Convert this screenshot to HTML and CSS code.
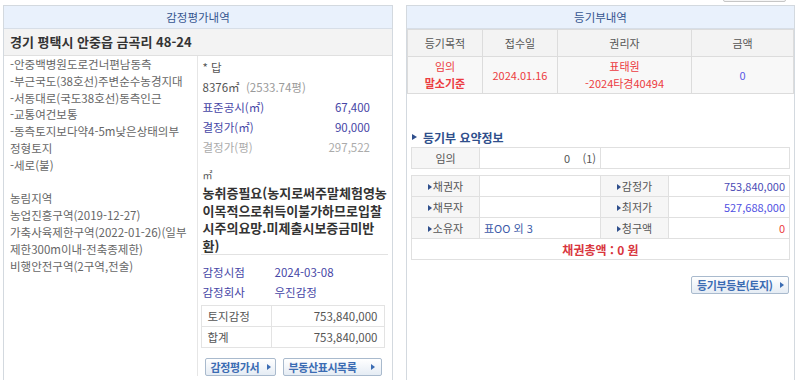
FILE: index.html
```html
<!DOCTYPE html>
<html lang="ko">
<head>
    <meta charset="UTF-8">
    <meta name="viewport" content="width=device-width, initial-scale=1.0">
    <title>감정평가내역 / 등기부내역</title>
    <link rel="stylesheet" href="styles.css">
</head>
<body>
    <div class="topbar"><span class="top-btn"></span></div>
    <div class="wrap">
        <!-- 감정평가 -->
        <div class="panel appraisal">
            <div class="panel-title">감정평가내역</div>
            <div class="addr">경기 평택시 안중읍 금곡리 48-24</div>
            <div class="detail">
                <div class="desc">
                    -안중백병원도로건너편남동측<br>
                    -부근국도(38호선)주변순수농경지대<br>
                    -서동대로(국도38호선)동측인근<br>
                    -교통여건보통<br>
                    -동측토지보다약4-5m낮은상태의부<br>
                    정형토지<br>
                    -세로(불)<br>
                    <br>
                    농림지역<br>
                    농업진흥구역(2019-12-27)<br>
                    가축사육제한구역(2022-01-26)(일부<br>
                    제한300m이내-전축종제한)<br>
                    비행안전구역(2구역,전술)
                </div>
                <div class="info">
                    <div class="row">* 답</div>
                    <div class="row">8376㎡ &nbsp;<span class="muted">(2533.74평)</span></div>
                    <div class="row price"><span>표준공시(㎡)</span><span>67,400</span></div>
                    <div class="row price"><span>결정가(㎡)</span><span>90,000</span></div>
                    <div class="row price dim"><span>결정가(평)</span><span>297,522</span></div>
                    <div class="unit">㎡</div>
                    <div class="notice-box">
                        <p class="notice">농취증필요(농지로써주말체험영농이목적으로취득이불가하므로입찰시주의요망.미제출시보증금미반환)</p>
                    </div>
                    <div class="row meta"><span class="key">감정시점</span><span>2024-03-08</span></div>
                    <div class="row meta"><span class="key">감정회사</span><span>우진감정</span></div>
                    <table class="amount-table">
                        <tr><td class="name">토지감정</td><td class="num">753,840,000</td></tr>
                        <tr><td class="name">합계</td><td class="num">753,840,000</td></tr>
                    </table>
                    <div class="btns">
                        <button class="btn">감정평가서</button>
                        <button class="btn wide">부동산표시목록</button>
                    </div>
                </div>
            </div>
        </div>

        <!-- 등기부 -->
        <div class="panel registry">
            <div class="panel-title">등기부내역</div>
            <table class="reg-table">
                <colgroup>
                    <col style="width: 75px">
                    <col style="width: 75px">
                    <col style="width: 134px">
                    <col>
                </colgroup>
                <tr>
                    <th>등기목적</th>
                    <th>접수일</th>
                    <th>권리자</th>
                    <th>금액</th>
                </tr>
                <tr>
                    <td class="red">임의<br><b>말소기준</b></td>
                    <td class="red">2024.01.16</td>
                    <td class="red">표태원<br>-2024타경40494</td>
                    <td class="blue">0</td>
                </tr>
            </table>

            <div class="summary">
                <h3 class="sum-title">등기부 요약정보</h3>
                <table class="sum-table">
                    <colgroup>
                        <col style="width: 68px">
                        <col style="width: 121px">
                        <col style="width: 68px">
                        <col>
                    </colgroup>
                    <tr>
                        <td class="label plain">임의</td>
                        <td class="val right">0&nbsp;&nbsp;&nbsp;&nbsp;(1)</td>
                        <td colspan="2"></td>
                    </tr>
                </table>
                <table class="sum-table second">
                    <colgroup>
                        <col style="width: 68px">
                        <col style="width: 121px">
                        <col style="width: 68px">
                        <col>
                    </colgroup>
                    <tr>
                        <td class="label">채권자</td>
                        <td class="val"></td>
                        <td class="label">감정가</td>
                        <td class="val right navy">753,840,000</td>
                    </tr>
                    <tr>
                        <td class="label">채무자</td>
                        <td class="val"></td>
                        <td class="label">최저가</td>
                        <td class="val right bright">527,688,000</td>
                    </tr>
                    <tr>
                        <td class="label">소유자</td>
                        <td class="val owner">표OO 외 3</td>
                        <td class="label">청구액</td>
                        <td class="val right red">0</td>
                    </tr>
                    <tr>
                        <td colspan="4" class="total">채권총액 : 0 원</td>
                    </tr>
                </table>
                <div class="btn-row">
                    <button class="btn reg">등기부등본(토지)</button>
                </div>
            </div>
        </div>
    </div>
</body>
</html>
```

FILE: styles.css
```css
/* General */
* {
    box-sizing: border-box;
}
body {
    margin: 0;
    font-family: "Noto Sans CJK KR", "Noto Sans", sans-serif;
    font-size: 11px;
    color: #555555;
    background: #ffffff;
    overflow: hidden;
}
.topbar {
    height: 5px;
    overflow: hidden;
    display: flex;
    justify-content: flex-end;
    padding-right: 14px;
}
.top-btn {
    width: 63px;
    height: 20px;
    margin-top: -18px;
    border: 1px solid #c6c6c6;
    border-radius: 2px;
    background: #f5f5f5;
}
.wrap {
    display: flex;
    gap: 13px;
    padding-left: 3px;
}

/* Panels */
.panel {
    border: 1px solid #d3d9df;
    border-bottom: none;
    height: 375px;
}
.appraisal {
    width: 390px;
}
.registry {
    width: 389px;
}
.panel-title {
    height: 23px;
    line-height: 22px;
    background: #e9f1fc;
    border-bottom: 1px solid #d7dee7;
    text-align: center;
    color: #35558f;
    font-size: 11.5px;
}

/* 감정평가 */
.addr {
    height: 27px;
    line-height: 26px;
    padding-left: 6px;
    background: #f3f3f3;
    border-bottom: 1px solid #e0e0e0;
    font-size: 13px;
    font-weight: bold;
    color: #333333;
}
.detail {
    display: flex;
}
.desc {
    width: 196px;
    padding-left: 6px;
    border-right: 1px solid #e6e6e6;
    font-size: 11.5px;
    line-height: 16.8px;
    color: #666666;
    white-space: nowrap;
}
.info {
    flex: 1;
    padding: 1px 4px 0 3px;
}
.row {
    height: 20px;
    line-height: 20px;
    padding-left: 2px;
    font-size: 11.5px;
}
.muted {
    color: #9a9a9a;
}
.price {
    display: flex;
    justify-content: space-between;
    padding-right: 18px;
    color: #4646a6;
}
.price.dim {
    color: #ababab;
}
.unit {
    margin-top: 8px;
    height: 19px;
    line-height: 19px;
    padding-left: 2px;
    font-size: 10px;
}
.notice-box {
    border-bottom: 1px solid #e2e2e2;
}
.notice {
    width: 187.5px;
    margin: 0;
    padding-left: 2px;
    font-size: 13px;
    font-weight: bold;
    line-height: 17.5px;
    color: #333333;
    word-break: break-all;
}
.meta {
    color: #4646a6;
}
.meta .key {
    display: inline-block;
    width: 72px;
}
.notice-box + .meta {
    margin-top: 7px;
}
.amount-table {
    width: 184px;
    margin-top: 3px;
    border-collapse: collapse;
    font-size: 11.5px;
}
.amount-table td {
    height: 21px;
    padding: 0 6px;
    border: 1px solid #e3e3e3;
}
.amount-table .name {
    width: 70px;
    color: #555555;
}
.amount-table .num {
    text-align: right;
    color: #555555;
}
.btns {
    display: flex;
    gap: 7px;
    margin-top: 10px;
    padding-left: 4px;
}

/* Buttons */
.btn {
    display: flex;
    align-items: center;
    justify-content: space-between;
    width: 71px;
    height: 18px;
    padding: 0 4px 0 5px;
    border: 1px solid #a9bacd;
    border-radius: 2px;
    background: linear-gradient(#ffffff, #e5ecf4);
    color: #3b6cb3;
    font-family: inherit;
    font-size: 11px;
    font-weight: bold;
    letter-spacing: -0.4px;
    cursor: pointer;
}
.btn::after {
    content: "";
    border-left: 4px solid #3b6cb3;
    border-top: 3.5px solid transparent;
    border-bottom: 3.5px solid transparent;
}
.btn.wide {
    width: 99px;
    padding-right: 6px;
}
.btn.reg {
    width: 98px;
}

/* 등기부 */
.reg-table {
    width: 100%;
    border-collapse: collapse;
    table-layout: fixed;
}
.reg-table th,
.reg-table td {
    border: 1px solid #dcdcdc;
    text-align: center;
}
.reg-table th {
    height: 27px;
    background: #f3f3f3;
    font-weight: normal;
    color: #555555;
}
.reg-table td {
    height: 34px;
    line-height: 17px;
    background: #f8f8f8;
}
.red {
    color: #ec3b41;
}
.blue {
    color: #5a5ae6;
}
.summary {
    padding: 0 4px;
}
.sum-title {
    display: flex;
    align-items: center;
    margin: 33px 0 0 0;
    height: 20px;
    font-size: 12px;
    font-weight: bold;
    color: #2f4f8c;
}
.sum-title::before {
    content: "";
    margin: 0 6px 0 1px;
    border-left: 5px solid #2f4f8c;
    border-top: 3.5px solid transparent;
    border-bottom: 3.5px solid transparent;
}
.sum-table {
    width: 100%;
    border-collapse: collapse;
    table-layout: fixed;
}
.sum-table.second {
    margin-top: 6px;
}
.sum-table td {
    height: 21px;
    padding: 0 4px;
    border: 1px solid #e0e0e0;
}
.sum-table .label {
    background: #f6f6f6;
    text-align: center;
    color: #555555;
}
.sum-table .label::before {
    content: "";
    display: inline-block;
    vertical-align: 1px;
    margin-right: 1px;
    border-left: 4px solid #2f4f8c;
    border-top: 3px solid transparent;
    border-bottom: 3px solid transparent;
}
.sum-table .label.plain::before {
    display: none;
}
.sum-table .right {
    text-align: right;
}
.sum-table .navy {
    color: #4b4bb5;
}
.sum-table .bright {
    color: #4f4fe2;
}
.sum-table .owner {
    color: #3c5aa8;
}
.sum-table .total {
    text-align: center;
    font-size: 12px;
    font-weight: bold;
    color: #d9363e;
}
.btn-row {
    display: flex;
    justify-content: flex-end;
    margin-top: 16px;
    padding-right: 1px;
}
```
